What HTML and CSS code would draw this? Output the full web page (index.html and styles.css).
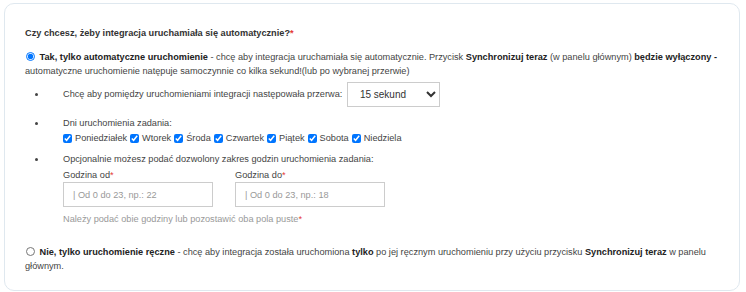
FILE: index.html
```html
<!doctype html>
<html lang="pl">
<head>
  <meta charset="UTF-8" />
  <title>Integracja - uruchamianie</title>
  <link rel="stylesheet" href="styles.css">
</head>
<body>
  <div class="card">
    <p class="question">Czy chcesz, żeby integracja uruchamiała się automatycznie?<span class="req">*</span></p>

    <label class="option">
      <input type="radio" name="mode" checked>
      <b>Tak, tylko automatyczne uruchomienie</b> - chcę aby integracja uruchamiała się automatycznie. Przycisk <b>Synchronizuj teraz</b> (w panelu głównym) <b>będzie wyłączony -</b> automatyczne uruchomienie natępuje samoczynnie co kilka sekund!(lub po wybranej przerwie)
    </label>

    <ul class="settings">
      <li class="row-select">
        Chcę aby pomiędzy uruchomieniami integracji następowała przerwa:
        <select class="interval">
          <option>15 sekund</option>
          <option>30 sekund</option>
          <option>60 sekund</option>
        </select>
      </li>
      <li>
        Dni uruchomienia zadania:
        <div class="days">
          <label><input type="checkbox" checked>Poniedziałek</label>
          <label><input type="checkbox" checked>Wtorek</label>
          <label><input type="checkbox" checked>Środa</label>
          <label><input type="checkbox" checked>Czwartek</label>
          <label><input type="checkbox" checked>Piątek</label>
          <label><input type="checkbox" checked>Sobota</label>
          <label><input type="checkbox" checked>Niedziela</label>
        </div>
      </li>
      <li>
        Opcjonalnie możesz podać dozwolony zakres godzin uruchomienia zadania:
        <div class="hours">
          <div class="field">
            <span>Godzina od<span class="req">*</span></span>
            <input type="text" placeholder="| Od 0 do 23, np.: 22">
          </div>
          <div class="field">
            <span>Godzina do<span class="req">*</span></span>
            <input type="text" placeholder="| Od 0 do 23, np.: 18">
          </div>
        </div>
        <p class="hint">Należy podać obie godziny lub pozostawić oba pola puste<span class="req">*</span></p>
      </li>
    </ul>

    <label class="option">
      <input type="radio" name="mode">
      <b>Nie, tylko uruchomienie ręczne</b> - chcę aby integracja została uruchomiona <b>tylko</b> po jej ręcznym uruchomieniu przy użyciu przycisku <b>Synchronizuj teraz</b> w panelu głównym.
    </label>
  </div>
</body>
</html>
```

FILE: styles.css
```css
body {
  margin: 0;
  padding: 3px 6px 2px 4px;
  background-color: #fff;
  font-family: "Liberation Sans", Arial, sans-serif;
  font-size: 9.2px;
  color: #444;
}

.card {
  border: 1px solid #dfe8ef;
  border-radius: 10px;
  padding: 19px 20px 17px 20px;
}

.question {
  margin: 0 0 7px 0;
  font-size: 9.2px;
  font-weight: bold;
  line-height: 20px;
  color: #333;
}

.req {
  color: #e53935;
}

.option {
  display: block;
  line-height: 14px;
}

.option b {
  color: #222;
}

.option input {
  width: 9px;
  height: 9px;
  margin: 0 2px 0 1px;
  vertical-align: -1px;
}

.settings {
  margin: 4px 0 19px 0;
  padding-left: 22px;
}

.settings li {
  margin-bottom: 7px;
  padding-left: 16px;
  line-height: 14px;
}

.settings li.row-select {
  height: 25px;
  line-height: 25px;
  margin-bottom: 9px;
}

.interval {
  width: 93px;
  height: 25px;
  margin-left: 2px;
  padding: 0 8px;
  vertical-align: middle;
  font-family: "Liberation Sans", Arial, sans-serif;
  font-size: 10px;
  color: #333;
  background-color: #fff;
  border: 1px solid #ccc;
  border-radius: 0;
}

.days {
  display: flex;
  gap: 3px;
  margin-top: 1px;
}

.days label {
  display: flex;
  align-items: center;
}

.days input {
  width: 9px;
  height: 9px;
  margin: 0 3px 0 0;
}

.hours {
  display: flex;
  gap: 22px;
  margin-top: 2px;
}

.field {
  display: flex;
  flex-direction: column;
}

.field input {
  box-sizing: border-box;
  width: 150px;
  height: 25px;
  padding: 0 9px;
  border: 1px solid #ccc;
  font-family: "Liberation Sans", Arial, sans-serif;
  font-size: 9.2px;
}

.field input::placeholder {
  color: #999;
}

.hint {
  margin: 5px 0 0 0;
  color: #999;
}
```
